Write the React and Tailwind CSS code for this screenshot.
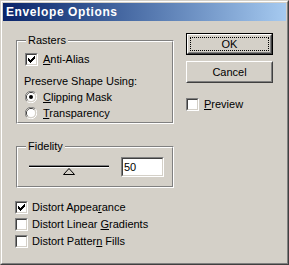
import React from "react";

function Check({ checked }) {
  return (
    <div className="w-[13px] h-[13px] shrink-0 border border-t-[#808080] border-l-[#808080] border-r-white border-b-white">
      <div className="w-full h-full border border-t-[#404040] border-l-[#404040] border-r-[#d4d0c8] border-b-[#d4d0c8] bg-white">
        {checked && (
          <svg width="9" height="9" viewBox="0 0 9 9" shapeRendering="crispEdges" className="block">
            <rect x="1" y="3" width="1" height="3" fill="#000" />
            <rect x="2" y="4" width="1" height="3" fill="#000" />
            <rect x="3" y="5" width="1" height="3" fill="#000" />
            <rect x="4" y="4" width="1" height="3" fill="#000" />
            <rect x="5" y="3" width="1" height="3" fill="#000" />
            <rect x="6" y="2" width="1" height="3" fill="#000" />
            <rect x="7" y="1" width="1" height="3" fill="#000" />
          </svg>
        )}
      </div>
    </div>
  );
}

function Radio({ checked }) {
  return (
    <svg width="12" height="12" viewBox="0 0 12 12" className="shrink-0 block">
      <path d="M1.76 10.24 A6 6 0 0 0 10.24 1.76" fill="none" stroke="#ffffff" strokeWidth="1" />
      <path d="M10.24 1.76 A6 6 0 0 0 1.76 10.24" fill="none" stroke="#808080" strokeWidth="1" />
      <path d="M9.18 2.82 A4.5 4.5 0 0 0 2.82 9.18" fill="none" stroke="#404040" strokeWidth="1" />
      <path d="M2.82 9.18 A4.5 4.5 0 0 0 9.18 2.82" fill="none" stroke="#d4d0c8" strokeWidth="1" />
      <circle cx="6" cy="6" r="4" fill="#ffffff" />
      {checked && <circle cx="6" cy="6" r="2" fill="#000" />}
    </svg>
  );
}

function U({ children }) {
  return <span className="underline underline-offset-[1px]">{children}</span>;
}

function Group({ label, className, innerClassName, children }) {
  return (
    <div className={"relative border border-t-[#808080] border-l-[#808080] border-r-white border-b-white " + className}>
      <div className={"h-full border border-t-white border-l-white border-r-[#808080] border-b-[#808080] " + innerClassName}>
        {children}
      </div>
      <div className="absolute left-[9px] top-[-7px] bg-[#d4d0c8] px-[2px] leading-[13px]">{label}</div>
    </div>
  );
}

export default function App() {
  return (
    <div className="w-[289px] h-[265px] bg-[#d4d0c8] border border-t-[#d4d0c8] border-l-[#d4d0c8] border-r-[#404040] border-b-[#404040] font-['Liberation_Sans',Arial,sans-serif] text-[11px] text-black leading-[13px]">
      <div className="h-full border border-t-white border-l-white border-r-[#808080] border-b-[#808080] p-px flex flex-col">
        <div className="h-[18px] shrink-0 bg-gradient-to-r from-[#0a246a] to-[#a6caf0] flex items-center pl-[3px] text-white font-bold text-[12px] tracking-[0.6px]">
          Envelope Options
        </div>
        <div className="flex flex-1">
          <div className="ml-[13px] w-[158px] pt-[19px] flex flex-col">
            <Group label="Rasters" className="h-[84px]" innerClassName="pl-[7px] pt-[9px] flex flex-col">
              <div className="h-[16px] flex items-center gap-[5px]">
                <Check checked />
                <span><U>A</U>nti-Alias</span>
              </div>
              <div className="h-[16px] mt-[6px] flex items-center -ml-[1px]">Preserve Shape Using:</div>
              <div className="h-[16px] flex items-center gap-[6px]">
                <Radio checked />
                <span><U>C</U>lipping Mask</span>
              </div>
              <div className="h-[16px] flex items-center gap-[6px]">
                <Radio />
                <span><U>T</U>ransparency</span>
              </div>
            </Group>
            <Group label="Fidelity" className="mt-[22px] h-[42px]" innerClassName="pl-[11px] flex items-center">
              <div className="relative w-[80px] h-[20px]">
                <div className="absolute left-0 right-0 top-[8px] h-[2px] border-t border-t-[#808080] border-b border-b-black"></div>
                <div className="absolute left-0 right-0 top-[10px] h-px bg-white"></div>
                <svg width="12" height="7" viewBox="0 0 12 7" className="absolute left-[34px] top-[11px]">
                  <polygon points="0.5,6.5 6,0.5 11.5,6.5" fill="#d4d0c8" stroke="#000" strokeWidth="1" />
                </svg>
              </div>
              <div className="ml-[12px] w-[43px] h-[20px] border border-t-[#808080] border-l-[#808080] border-r-white border-b-white">
                <div className="w-full h-full border border-t-[#404040] border-l-[#404040] border-r-[#d4d0c8] border-b-[#d4d0c8] bg-white flex items-center pl-[1px]">
                  50
                </div>
              </div>
            </Group>
            <div className="mt-[11px] -ml-[1px] flex flex-col">
              <div className="h-[17px] flex items-center gap-[4px]">
                <Check checked />
                <span>Distort Appea<U>r</U>ance</span>
              </div>
              <div className="h-[17px] flex items-center gap-[4px]">
                <Check />
                <span>Distort Linear <U>G</U>radients</span>
              </div>
              <div className="h-[17px] flex items-center gap-[4px]">
                <Check />
                <span>Distort Patter<U>n</U> Fills</span>
              </div>
            </div>
          </div>
          <div className="ml-[12px] pt-[12px] w-[87px] flex flex-col">
            <div className="h-[22px] border border-black">
              <div className="h-full border border-t-white border-l-white border-r-[#404040] border-b-[#404040]">
                <div className="h-full border border-t-[#d4d0c8] border-l-[#d4d0c8] border-r-[#808080] border-b-[#808080] p-px">
                  <div className="h-full border border-dotted border-black flex items-center justify-center">OK</div>
                </div>
              </div>
            </div>
            <div className="mt-[6px] h-[22px] border border-t-white border-l-white border-r-[#404040] border-b-[#404040]">
              <div className="h-full border border-t-[#d4d0c8] border-l-[#d4d0c8] border-r-[#808080] border-b-[#808080] flex items-center justify-center">
                Cancel
              </div>
            </div>
            <div className="mt-[13px] h-[16px] flex items-center gap-[5px]">
              <Check />
              <span><U>P</U>review</span>
            </div>
          </div>
        </div>
      </div>
    </div>
  );
}
